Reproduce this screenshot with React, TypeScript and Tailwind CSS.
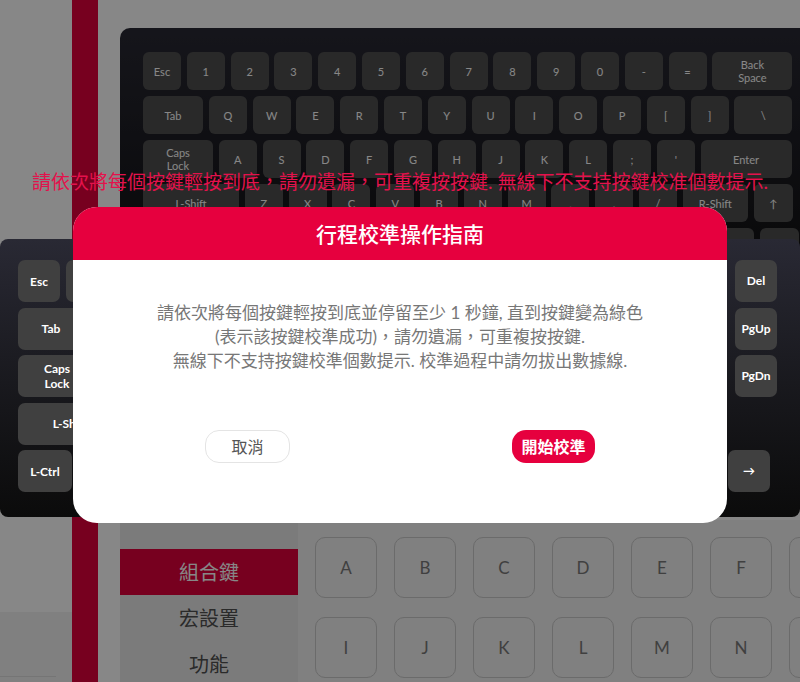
import React from "react"

type Key = { label: string; w?: string }

const topRows: Key[][] = [
  [
    { label: "Esc" }, { label: "1" }, { label: "2" }, { label: "3" }, { label: "4" }, { label: "5" }, { label: "6" },
    { label: "7" }, { label: "8" }, { label: "9" }, { label: "0" }, { label: "-" }, { label: "=" },
    { label: "Back\nSpace", w: "w-[80px]" },
  ],
  [
    { label: "Tab", w: "w-[60px]" }, { label: "Q" }, { label: "W" }, { label: "E" }, { label: "R" }, { label: "T" },
    { label: "Y" }, { label: "U" }, { label: "I" }, { label: "O" }, { label: "P" }, { label: "[" }, { label: "]" },
    { label: "\\", w: "w-[58px]" },
  ],
  [
    { label: "Caps\nLock", w: "w-[70px]" }, { label: "A" }, { label: "S" }, { label: "D" }, { label: "F" }, { label: "G" },
    { label: "H" }, { label: "J" }, { label: "K" }, { label: "L" }, { label: ";" }, { label: "'" },
    { label: "Enter", w: "w-[91px]" },
  ],
  [
    { label: "L-Shift", w: "w-[96px]" }, { label: "Z" }, { label: "X" }, { label: "C" }, { label: "V" }, { label: "B" },
    { label: "N" }, { label: "M" }, { label: "," }, { label: "." }, { label: "/" },
    { label: "R-Shift", w: "w-[65px]" }, { label: "↑", w: "w-[39px]" },
  ],
  [
    { label: "L-Ctrl", w: "w-[60px]" }, { label: "Win", w: "w-[50px]" }, { label: "L-Alt", w: "w-[50px]" },
    { label: "", w: "w-[230px]" }, { label: "R-Alt", w: "w-[44px]" }, { label: "Fn", w: "w-[38px]" },
    { label: "←", w: "w-[104px]" }, { label: "→", w: "w-[39px]" },
  ],
]

const frontRows: { left: Key[]; right: Key[]; pr: string }[] = [
  { left: [{ label: "Esc" }, { label: "1" }], right: [{ label: "Del" }], pr: "pr-[23px]" },
  { left: [{ label: "Tab", w: "w-[66px]" }], right: [{ label: "PgUp" }], pr: "pr-[23px]" },
  { left: [{ label: "Caps\nLock", w: "w-[78px]" }], right: [{ label: "PgDn" }], pr: "pr-[23px]" },
  { left: [{ label: "L-Shift", w: "w-[104px]" }], right: [], pr: "pr-[23px]" },
  { left: [{ label: "L-Ctrl", w: "w-[54px]" }], right: [{ label: "→" }], pr: "pr-[30px]" },
]

const menu = ["組合鍵", "宏設置", "功能"]
const gridRows = [
  ["A", "B", "C", "D", "E", "F", "G"],
  ["I", "J", "K", "L", "M", "N", "O"],
]

export default function App() {
  return (
    <div className="relative w-[800px] h-[682px] overflow-hidden bg-white font-[Lato,'Noto_Sans_CJK_TC',sans-serif]">
      {/* page underneath the dim layer */}
      <div className="flex h-full">
        <aside className="w-[72px] shrink-0 flex flex-col">
          <div className="h-[612px] bg-white" />
          <div className="flex-1 bg-[#f1f1f1]">
            <div className="h-[65px] w-[56px] border-b border-[#dedede]" />
          </div>
        </aside>
        <div className="w-[26px] shrink-0 bg-[#e0003b]" />
        <main className="flex-1 min-w-0 pl-[22px] pt-[28px] flex flex-col overflow-hidden">
          <div className="w-[700px] h-[300px] shrink-0 rounded-[10px] bg-linear-to-b from-[#292934] to-[#0b0b0b] pl-[23px] pt-[24px] flex flex-col gap-[6px]">
            {topRows.map((row, i) => (
              <div key={i} className="flex gap-[5.8px]">
                {row.map((k, j) => (
                  <div
                    key={j}
                    className={`${k.w ?? "w-[38px]"} h-[38px] shrink-0 rounded-[6px] bg-[#4f4f4f] flex items-center justify-center text-center text-[11px] leading-[13px] text-white whitespace-pre-line`}
                  >
                    {k.label}
                  </div>
                ))}
              </div>
            ))}
          </div>

          <div className="mt-[192px] flex flex-1">
            <nav className="w-[178px] shrink-0 bg-[#e8e8e8] pt-[29px]">
              {menu.map((m, i) => (
                <div
                  key={m}
                  className={`h-[46px] flex items-center justify-center text-[20px] ${i === 0 ? "bg-[#e0003b] text-white" : "text-[#505050]"}`}
                >
                  {m}
                </div>
              ))}
            </nav>
            <div className="flex-1 bg-[#f1f1f1] pl-[17px] pt-[17px] flex flex-col gap-[19px] overflow-hidden">
              {gridRows.map((row, i) => (
                <div key={i} className="flex gap-[17px]">
                  {row.map((l, j) => (
                    <div
                      key={l}
                      className="w-[62px] h-[61px] shrink-0 rounded-[10px] border-[1.5px] border-[#cacaca] flex items-center justify-center text-[17px] text-[#797979]"
                    >
                      {j < 6 ? l : ""}
                    </div>
                  ))}
                </div>
              ))}
            </div>
          </div>
        </main>
      </div>

      {/* dim layer */}
      <div className="absolute inset-0 bg-black/[0.47]" />

      {/* hint line */}
      <p className="absolute left-0 right-0 top-[170px] text-center text-[19px] leading-6 text-[#e3124c]">
        請依次將每個按鍵輕按到底，請勿遺漏，可重複按按鍵. 無線下不支持按鍵校准個數提示.
      </p>

      {/* highlighted keyboard */}
      <div className="absolute left-0 top-[239px] w-[800px] h-[278px] rounded-[8px] bg-linear-to-b from-[#292934] to-[#0b0b0b] pl-[18px] pt-[21px] flex flex-col gap-[5.5px]">
        {frontRows.map((row, i) => (
          <div key={i} className={`flex justify-between ${row.pr}`}>
            <div className="flex gap-[6px]">
              {row.left.map((k, j) => (
                <div
                  key={j}
                  className={`${k.w ?? "w-[42px]"} h-[42px] rounded-[7px] bg-[#404040] flex items-center justify-center text-center text-[12px] leading-[15px] font-bold text-white whitespace-pre-line`}
                >
                  {k.label}
                </div>
              ))}
            </div>
            <div className="flex gap-[6px]">
              {row.right.map((k, j) => (
                <div
                  key={j}
                  className="w-[42px] h-[42px] rounded-[7px] bg-[#404040] flex items-center justify-center text-[12px] font-bold text-white"
                >
                  {k.label}
                </div>
              ))}
            </div>
          </div>
        ))}
      </div>

      {/* modal */}
      <div className="absolute left-[73px] top-[207px] w-[654px] h-[316px] rounded-[24px] bg-white overflow-hidden flex flex-col">
        <div className="h-[53px] shrink-0 bg-[#e6003e] flex items-center justify-center text-[21px] font-medium text-white">
          行程校準操作指南
        </div>
        <div className="pt-[41px] text-center text-[17px] leading-6 text-[#777]">
          請依次將每個按鍵輕按到底並停留至少 1 秒鐘, 直到按鍵變為綠色
          <br />
          (表示該按鍵校準成功)，請勿遺漏，可重複按按鍵.
          <br />
          無線下不支持按鍵校準個數提示. 校準過程中請勿拔出數據線.
        </div>
        <div className="mt-[57px] px-[132px] flex justify-between">
          <button className="w-[85px] h-[33px] rounded-[14px] border-[1.5px] border-[#e4e4e4] bg-white text-[16px] text-[#555]">
            取消
          </button>
          <button className="w-[83px] h-[33px] rounded-[14px] bg-[#e6003e] text-[16px] font-bold text-white">
            開始校準
          </button>
        </div>
      </div>
    </div>
  )
}
